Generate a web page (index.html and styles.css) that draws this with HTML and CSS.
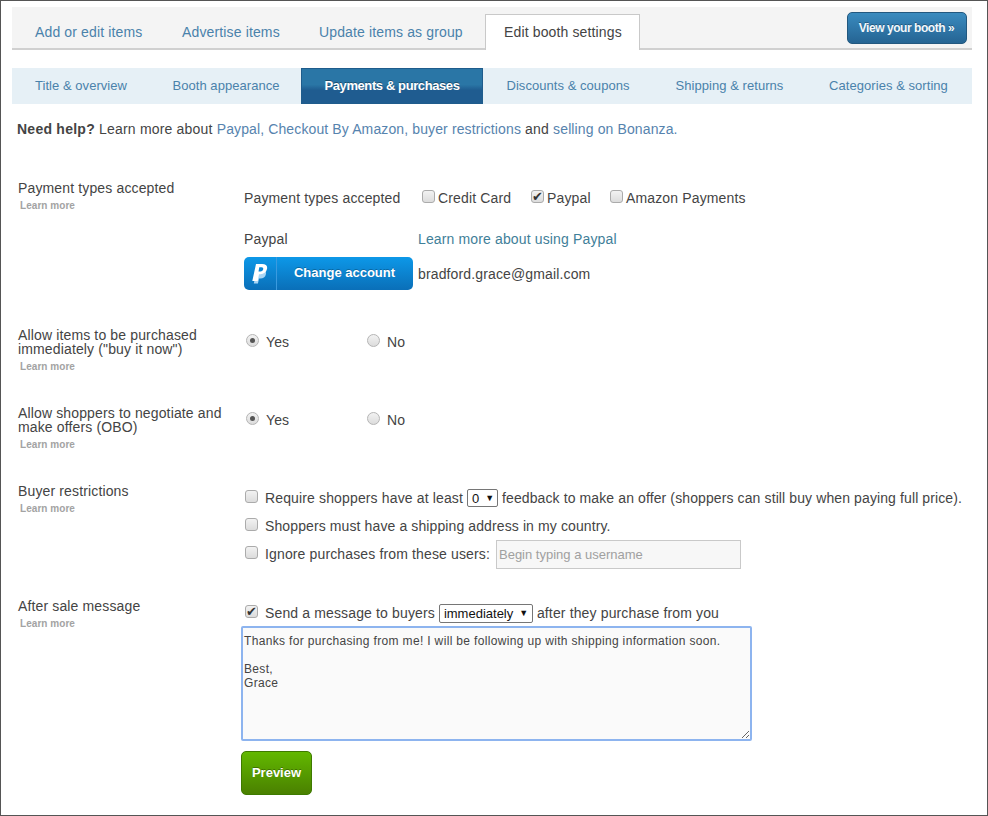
FILE: index.html
```html
<!DOCTYPE html>
<html lang="en">
<head>
<meta charset="utf-8">
<title>Edit booth settings</title>
<link rel="stylesheet" href="styles.css">
</head>
<body>
<div class="frame">
  <div class="main-tabs">
    <a class="main-tab tab-a">Add or edit items</a>
    <a class="main-tab tab-b">Advertise items</a>
    <a class="main-tab tab-c">Update items as group</a>
    <a class="main-tab active">Edit booth settings</a>
    <a class="view-booth">View your booth »</a>
  </div>
  <div class="sub-tabs">
    <a class="sub-tab s1">Title &amp; overview</a>
    <a class="sub-tab s2">Booth appearance</a>
    <a class="sub-tab s3 active">Payments &amp; purchases</a>
    <a class="sub-tab s4">Discounts &amp; coupons</a>
    <a class="sub-tab s5">Shipping &amp; returns</a>
    <a class="sub-tab s6">Categories &amp; sorting</a>
  </div>
  <p class="help"><b>Need help?</b> Learn more about <a>Paypal, Checkout By Amazon, buyer restrictions</a> and <a>selling on Bonanza.</a></p>

  <section class="row r-payment">
    <div class="label"><div class="title">Payment types accepted</div><a class="learn">Learn more</a></div>
    <div class="field">
      <div class="types">
        <span class="types-label">Payment types accepted</span>
        <label class="opt cc"><input class="box" type="checkbox">Credit Card</label>
        <label class="opt pp"><input class="box" type="checkbox" checked>Paypal</label>
        <label class="opt az"><input class="box" type="checkbox">Amazon Payments</label>
      </div>
      <div class="paypal-line"><span class="pp-name">Paypal</span><a class="pp-link">Learn more about using Paypal</a></div>
      <div class="paypal-account">
        <a class="pp-btn">
          <span class="pp-icon"><svg width="20" height="22" viewBox="0 0 20 22"><path d="M5.200 7.500h5c3.500 0 4.800 1.500 4.200 4.300-.6 2.900-2.700 4.300-5.600 4.300H7.600L6.400 21H2.300z" fill="#a9d6f5" transform="translate(1.500 -.5)"/><path d="M6 1h6.200c3.800 0 5.500 1.800 4.800 5-.7 3.300-3.300 5.200-6.600 5.200H9L7.700 18H2.300z" fill="#fff"/><path d="M9.300 4.300h2.200c1.400 0 2 .7 1.700 2-.3 1.400-1.300 2.100-2.700 2.100H8.500z" fill="#0a86d6"/></svg></span>
          <span class="pp-text">Change account</span>
        </a>
        <span class="email">bradford.grace@gmail.com</span>
      </div>
    </div>
  </section>

  <section class="row r-buy">
    <div class="label"><div class="title">Allow items to be purchased immediately ("buy it now")</div><a class="learn">Learn more</a></div>
    <div class="field radios">
      <label class="radio"><input class="dot" type="radio" name="buy" checked>Yes</label>
      <label class="radio"><input class="dot" type="radio" name="buy">No</label>
    </div>
  </section>

  <section class="row r-obo">
    <div class="label"><div class="title">Allow shoppers to negotiate and make offers (OBO)</div><a class="learn">Learn more</a></div>
    <div class="field radios">
      <label class="radio"><input class="dot" type="radio" name="obo" checked>Yes</label>
      <label class="radio"><input class="dot" type="radio" name="obo">No</label>
    </div>
  </section>

  <section class="row r-buyer">
    <div class="label"><div class="title">Buyer restrictions</div><a class="learn">Learn more</a></div>
    <div class="field">
      <div class="check-line"><input class="box" type="checkbox"><span>Require shoppers have at least</span><span class="select sel-num">0<i>▼</i></span><span class="tight">feedback to make an offer (shoppers can still buy when paying full price).</span></div>
      <div class="check-line"><input class="box" type="checkbox"><span class="tight">Shoppers must have a shipping address in my country.</span></div>
      <div class="check-line"><input class="box" type="checkbox"><span>Ignore purchases from these users:</span><input class="username" type="text" placeholder="Begin typing a username"></div>
    </div>
  </section>

  <section class="row r-after">
    <div class="label"><div class="title">After sale message</div><a class="learn">Learn more</a></div>
    <div class="field">
      <div class="check-line send"><input class="box" type="checkbox" checked><span>Send a message to buyers</span><span class="select sel-when">immediately<i>▼</i></span><span>after they purchase from you</span></div>
      <textarea class="message">Thanks for purchasing from me! I will be following up with shipping information soon.

Best,
Grace</textarea>
      <a class="preview">Preview</a>
    </div>
  </section>
</div>
</body>
</html>
```
FILE: styles.css
```css
* { box-sizing: border-box; }
html, body { margin: 0; padding: 0; background: #fff; }
body { width: 988px; height: 816px; overflow: hidden; font-family: "Liberation Sans", Arial, sans-serif; font-size: 14px; letter-spacing: .14px; color: #444; }
a { color: #3f7ead; text-decoration: none; }
.frame { width: 988px; height: 816px; border: 1px solid #555; padding: 6px 15px 0 11px; overflow: hidden; }

.main-tabs { display: flex; align-items: flex-end; height: 43px; background: #f4f4f4; border-bottom: 2px solid #d0d0d0; position: relative; padding-left: 23px; }
.main-tab { line-height: 22px; padding-bottom: 5px; font-size: 14px; color: #4a82ab; }
.tab-a { width: 147px; }
.tab-b { width: 137px; }
.tab-c { width: 166px; }
.main-tab.active { width: 155px; height: 36px; margin-bottom: -2px; padding: 6px 0 0 18px; background: #fff; border: 1px solid #c9c9c9; border-bottom: 0; color: #444; line-height: 22px; }
.view-booth { position: absolute; right: 5px; top: 5px; width: 120px; height: 32px; border-radius: 5px; border: 1px solid #22587f; background: linear-gradient(#3a8bbf, #256493); color: #f2f8fc; font-size: 12px; font-weight: bold; letter-spacing: -.45px; text-align: center; line-height: 31px; padding-right: 1px; text-shadow: 0 -1px 0 rgba(0,0,0,.3); }

.sub-tabs { display: flex; height: 36px; margin-top: 18px; background: #e6f0f6; }
.sub-tab { line-height: 35px; font-size: 13px; letter-spacing: .05px; color: #4a82ab; text-align: center; white-space: nowrap; }
.s1 { width: 139px; padding-right: 1px; }
.s2 { width: 150px; }
.s3 { width: 182px; }
.s4 { width: 170px; }
.s5 { width: 153px; }
.s6 { width: 166px; padding-right: 1px; }
.sub-tab.active { color: #fff; font-weight: bold; letter-spacing: -.4px; height: 36px; border: 1px solid #1f5c8c; background: linear-gradient(#2a76a6 0, #2a76a6 46%, #1f5c90 62%, #1f5c90 100%); line-height: 33px; text-shadow: 0 -1px 0 rgba(0,0,0,.35); }

.help { margin: 17px 0 0 5px; line-height: 16px; font-size: 14px; letter-spacing: .19px; white-space: nowrap; }
.help b { color: #444; letter-spacing: .25px; }
.help a { color: #5683ae; letter-spacing: .12px; }

.row { display: flex; }
.label { width: 232px; padding: 0 0 0 6px; flex: none; }
.title { font-size: 14px; line-height: 14px; width: 212px; color: #444; }
.learn { display: block; margin: 5px 0 0 2px; font-size: 10px; letter-spacing: .05px; line-height: 12px; font-weight: bold; color: #a3a3a3; }
.field { flex: 1; min-width: 0; }

.box { appearance: none; width: 13px; height: 13px; margin: 0; flex: none; position: relative; border: 1px solid #ababab; border-radius: 3px; background: linear-gradient(#f2f2f2, #dcdcdc); }
.box:checked::after { content: "✔"; position: absolute; left: 0; top: -1px; font: 13px/13px "DejaVu Sans", sans-serif; letter-spacing: 0; color: #333; }
.dot { appearance: none; width: 13px; height: 13px; margin: 0; flex: none; position: relative; border: 1px solid #b5b5b5; border-radius: 50%; background: linear-gradient(#f2f2f2, #dcdcdc); }
.dot:checked::after { content: ""; position: absolute; left: 3px; top: 3px; width: 5px; height: 5px; border-radius: 50%; background: #555; }

.r-payment { margin-top: 44px; height: 147px; }
.types { display: flex; align-items: center; height: 20px; margin-top: 7px; }
.types-label { width: 178px; }
.opt { display: flex; align-items: center; white-space: nowrap; }
.opt .box { margin-right: 3px; top: -2px; }
.cc { width: 109px; }
.pp { width: 79px; }
.paypal-line { display: flex; height: 20px; margin-top: 21px; line-height: 20px; }
.pp-name { width: 174px; }
.pp-link { color: #3f8099; }
.paypal-account { display: flex; align-items: center; margin-top: 8px; }
.pp-btn { display: flex; width: 169px; height: 33px; border-radius: 5px; background: linear-gradient(#0d98e8, #0a6fb8); color: #fff; font-weight: bold; font-size: 13px; letter-spacing: 0; }
.pp-icon { width: 33px; border-right: 1px solid #3a9adf; display: flex; align-items: center; justify-content: center; }
.pp-text { flex: 1; text-align: center; line-height: 32px; padding-right: 1px; text-shadow: 0 -1px 0 rgba(0,0,0,.25); }
.email { margin-left: 5px; }

.radios { display: flex; padding-top: 6px; }
.radio { display: flex; align-items: center; height: 16px; line-height: 16px; width: 121px; }
.radio .dot { margin: -4px 7px 0 2px; }
.r-buy { height: 78px; }
.r-obo { height: 78px; }

.r-buyer { height: 115px; }
.check-line { display: flex; align-items: center; gap: 4px; height: 28px; white-space: nowrap; }
.check-line .box { margin: -4px 3px 0 1px; }
.tight { letter-spacing: .11px; }
.select { display: inline-flex; align-items: center; justify-content: space-between; height: 18px; border: 1px solid #767676; border-radius: 2px; padding: 0 4px; color: #111; font-size: 13px; letter-spacing: 0; background: #fff; }
.select i { font-style: normal; font-size: 9px; margin-left: 6px; color: #111; }
.sel-num { width: 31px; }
.sel-when { width: 94px; height: 19px; }
.username { width: 245px; height: 29px; margin-left: 2px; padding: 0 2px; border: 1px solid #c9c9c9; background: #f7f7f7; font: 13px "Liberation Sans", Arial, sans-serif; color: #a0a0a0; }
.username::placeholder { color: #a0a0a0; opacity: 1; }

.r-after .field { margin-top: 1px; margin-left: -3px; }
.send { padding-left: 3px; height: 26px; }
.message { display: block; width: 511px; height: 115px; margin: 0; padding: 6px 1px; border: 2px solid #8db4ef; border-radius: 2px; background: #fafafa; font: 12px/14px "Liberation Sans", Arial, sans-serif; letter-spacing: .34px; color: #444; outline: 0; resize: both; }
.preview { display: block; width: 71px; height: 44px; margin-top: 10px; border-radius: 5px; border: 1px solid #3e7a00; background: linear-gradient(#62b800, #4a8000); color: #fff; font-weight: bold; font-size: 13px; letter-spacing: 0; text-align: center; line-height: 42px; text-shadow: 0 -1px 0 rgba(0,0,0,.3); }
```
